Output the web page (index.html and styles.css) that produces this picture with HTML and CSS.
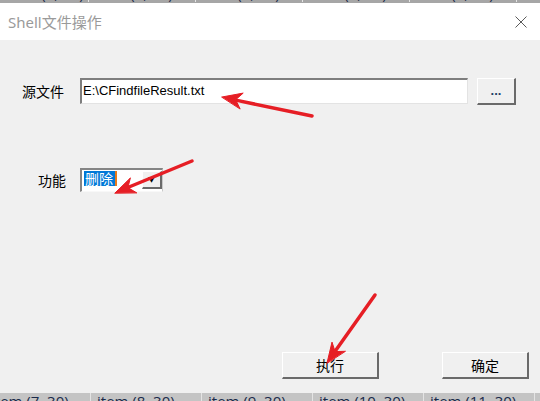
FILE: index.html
```html
<!DOCTYPE html>
<html lang="zh-CN">
<head>
    <meta charset="UTF-8">
    <title>Shell文件操作</title>
    <link rel="stylesheet" href="styles.css">
</head>
<body>
    <div class="strip strip-top">
        <div class="cells">
            <span class="cell">item (1, 29)</span>
            <span class="cell">item (2, 29)</span>
            <span class="cell">item (3, 29)</span>
            <span class="cell">item (4, 29)</span>
            <span class="cell">item (5, 29)</span>
            <span class="cell">item (6, 29)</span>
        </div>
    </div>
    <div class="dialog">
        <div class="titlebar">
            <span class="title">Shell文件操作</span>
            <svg class="close" width="12" height="12" viewBox="0 0 12 12">
                <path d="M0.5 0.5 L11.5 11.5 M11.5 0.5 L0.5 11.5" stroke="#5a5a5a" stroke-width="1" fill="none"/>
            </svg>
        </div>
        <div class="client">
            <div class="row row-file">
                <label class="lbl lbl-file">源文件</label>
                <div class="edit">E:\CFindfileResult.txt</div>
                <button class="btn btn-browse">...</button>
            </div>
            <div class="row row-func">
                <label class="lbl lbl-func">功能</label>
                <div class="combo">
                    <span class="sel">删除</span><span class="caret"></span>
                    <span class="drop">▼</span>
                </div>
            </div>
            <div class="actions">
                <button class="btn btn-run">执行</button>
                <button class="btn btn-ok">确定</button>
            </div>
        </div>
    </div>
    <div class="strip strip-bottom">
        <div class="cells">
            <span class="cell">item (7, 30)</span>
            <span class="cell">item (8, 30)</span>
            <span class="cell">item (9, 30)</span>
            <span class="cell">item (10, 30)</span>
            <span class="cell">item (11, 30)</span>
        </div>
    </div>
    <!-- red annotation arrows drawn over the dialog -->
    <svg class="arrows" width="540" height="401" viewBox="0 0 540 401">
        <g fill="#e61e25" stroke="#e61e25" stroke-linecap="round">
            <line x1="312" y1="116" x2="237" y2="100.4" stroke-width="3.5"/>
            <polygon points="222,97 243.2,93.1 235.7,99.7 240,108.7" stroke-width="1"/>
            <line x1="192" y1="161" x2="129" y2="187" stroke-width="3.5"/>
            <polygon points="115,193 130.4,177.9 127.9,187.6 136.5,192.7" stroke-width="1"/>
            <line x1="375" y1="295" x2="336" y2="350" stroke-width="3.5"/>
            <polygon points="327,363 332,342.1 335.1,351.6 345.1,351.3" stroke-width="1"/>
        </g>
    </svg>
</body>
</html>
```

FILE: styles.css
```css
body {
    margin: 0;
    width: 540px;
    height: 401px;
    overflow: hidden;
    display: flex;
    flex-direction: column;
    background-color: #f0f0f0;
    font-family: "Noto Sans", "Noto Sans CJK SC", sans-serif;
    position: relative;
}
.strip {
    overflow: hidden;
    flex: none;
}
.strip .cells {
    display: flex;
    white-space: nowrap;
    font-family: "Open Sans", "Noto Sans", sans-serif;
    font-size: 15px;
    line-height: 18px;
    color: #1a2a4a;
}
.strip .cell {
    flex: none;
    box-sizing: border-box;
    border-right: 1px solid #e4e4e4;
    padding-left: 6px;
}
.strip-top {
    height: 3px;
    background-color: #a6a6a6;
}
.strip-top .cells {
    margin-top: -16px;
}
.strip-top .cell {
    width: 107px;
}
.strip-top .cell:first-child {
    width: 89px;
}
.strip-bottom {
    height: 8px;
    background-color: #c4c4c4;
}
.strip-bottom .cells {
    margin-left: -21px;
    margin-top: -1px;
}
.strip-bottom .cell {
    width: 111px;
}
.strip-bottom .cell:first-child {
    width: 112px;
    padding-left: 12px;
}
.dialog {
    flex: 1;
    display: flex;
    flex-direction: column;
}
.titlebar {
    height: 37px;
    background-color: #ffffff;
    display: flex;
    align-items: center;
    justify-content: space-between;
    padding: 0 13px 0 8px;
    flex: none;
}
.title {
    font-size: 15px;
    color: #9a9a9a;
    font-family: "Noto Sans", "Noto Sans CJK SC", sans-serif;
}
.client {
    flex: 1;
    display: flex;
    flex-direction: column;
    padding: 38px 11px 14px 22px;
}
.row {
    display: flex;
    align-items: flex-start;
}
.lbl {
    box-sizing: border-box;
    width: 58px;
    font-family: "Noto Sans CJK SC", sans-serif;
    font-size: 14px;
    color: #000000;
}
.lbl-file {
    line-height: 27px;
}
.lbl-func {
    padding-left: 16px;
    line-height: 24px;
}
.edit {
    box-sizing: border-box;
    width: 388px;
    height: 26px;
    background-color: #ffffff;
    border-style: solid;
    border-width: 2px 1px 1px 2px;
    border-color: #7e7e7e #e3e3e3 #e3e3e3 #7e7e7e;
    padding-left: 1px;
    font-family: "Liberation Sans", Arial, sans-serif;
    font-size: 13px;
    line-height: 22px;
    color: #000000;
}
.btn {
    box-sizing: border-box;
    height: 27px;
    background-color: #f0f0f0;
    border-style: solid;
    border-width: 1px 2px 2px 1px;
    border-color: #ffffff #6a6a6a #6a6a6a #ffffff;
    padding: 0;
    font-family: "Noto Sans CJK SC", sans-serif;
    font-size: 14px;
    color: #000000;
}
.btn-browse {
    width: 39px;
    margin-left: 9px;
    font-family: "Liberation Sans", Arial, sans-serif;
    font-size: 13px;
    font-weight: bold;
    color: #1f3f66;
    line-height: 20px;
}
.row-func {
    margin-top: 63px;
}
.combo {
    box-sizing: border-box;
    width: 83px;
    height: 24px;
    background-color: #ffffff;
    border-style: solid;
    border-width: 2px 1px 1px 2px;
    border-color: #858585 #c8c8c8 #f8f8f8 #858585;
    display: flex;
    align-items: flex-start;
    padding: 1px 0 0 2px;
}
.sel {
    background-color: #0078d7;
    color: #ffffff;
    font-family: "Noto Sans CJK SC", sans-serif;
    font-size: 14px;
    line-height: 15px;
    height: 15px;
    padding: 0 1px;
    width: 29px;
}
.caret {
    width: 2px;
    height: 15px;
    background-color: #e87a1a;
}
.drop {
    box-sizing: border-box;
    margin-left: auto;
    width: 20px;
    height: 18px;
    background-color: #f0f0f0;
    border-style: solid;
    border-width: 1px 2px 2px 1px;
    border-color: #ffffff #6a6a6a #6a6a6a #ffffff;
    font-size: 7px;
    line-height: 15px;
    text-align: center;
    color: #000000;
}
.actions {
    margin-top: auto;
    display: flex;
}
.btn-run {
    width: 97px;
    margin-left: 260px;
}
.btn-ok {
    width: 87px;
    margin-left: 63px;
}
.arrows {
    position: absolute;
    top: 0;
    left: 0;
    pointer-events: none;
}
```
